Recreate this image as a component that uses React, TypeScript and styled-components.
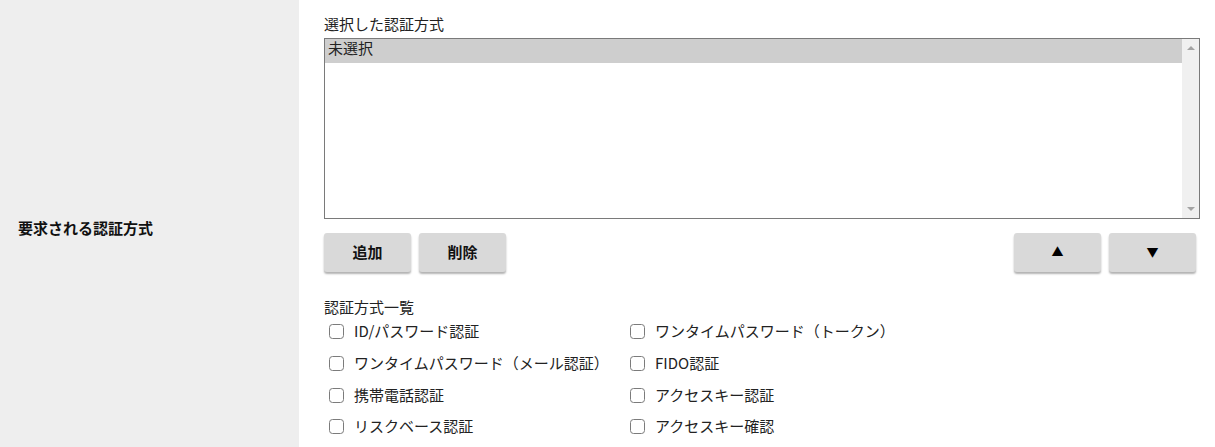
import React from "react";
import styled, { createGlobalStyle } from "styled-components";

const GlobalStyle = createGlobalStyle`
  html, body {
    margin: 0;
    padding: 0;
    background: #ffffff;
  }
  body {
    font-family: "Noto Sans CJK JP", "Noto Sans", sans-serif;
    color: #222222;
    font-size: 15px;
  }
  * { box-sizing: border-box; }
`;

const FormRow = styled.div`
  display: flex;
  width: 1215px;
`;

const HeaderCell = styled.div`
  width: 299px;
  flex: none;
  background: #eeeeee;
  display: flex;
  align-items: center;
  padding-left: 18px;
  padding-bottom: 2px;
  font-weight: 700;
  font-size: 15px;
  color: #111111;
`;

const BodyCell = styled.div`
  flex: 1;
  padding: 13px 15px 15px 25px;
  display: flex;
  flex-direction: column;
`;

const FieldLabel = styled.div<{ $top?: number }>`
  font-size: 15px;
  line-height: 22px;
  height: 22px;
  margin-top: ${(p) => p.$top ?? 0}px;
  color: #222222;
`;

const ListBox = styled.div`
  margin-top: 3px;
  height: 181px;
  border: 1px solid #7a7a7a;
  display: flex;
  background: #ffffff;
`;

const Options = styled.div`
  flex: 1;
  display: flex;
  flex-direction: column;
`;

const Option = styled.div<{ $selected?: boolean }>`
  height: 24px;
  line-height: 17px;
  padding-left: 3px;
  font-size: 15px;
  background: ${(p) => (p.$selected ? "#cecece" : "transparent")};
  color: #222222;
`;

const Scrollbar = styled.div`
  width: 17px;
  flex: none;
  background: #f0f0f0;
  display: flex;
  flex-direction: column;
  justify-content: space-between;
  align-items: center;
  padding: 7px 0;
`;

const Arrow = styled.div<{ $down?: boolean }>`
  width: 0;
  height: 0;
  border-left: 4px solid transparent;
  border-right: 4px solid transparent;
  ${(p) =>
    p.$down
      ? "border-top: 4px solid #a3a3a3;"
      : "border-bottom: 4px solid #a3a3a3;"}
`;

const ButtonBar = styled.div`
  margin-top: 14px;
  display: flex;
  justify-content: space-between;
`;

const ButtonGroup = styled.div<{ $right?: boolean }>`
  display: flex;
  gap: 8px;
  margin-right: ${(p) => (p.$right ? 4 : 0)}px;
`;

const ActionButton = styled.button`
  width: 87px;
  height: 39px;
  border: none;
  border-radius: 3px;
  background: #d9d9d9;
  box-shadow: 0 2px 2px rgba(0, 0, 0, 0.3);
  font-family: "Noto Sans CJK JP", "Noto Sans", sans-serif;
  font-weight: 700;
  font-size: 15px;
  color: #111111;
  display: flex;
  align-items: center;
  justify-content: center;
  padding: 0 0 2px;
  cursor: pointer;
`;

const ArrowGlyph = styled.span`
  font-size: 12px;
  line-height: 1;
  color: #000000;
`;

const CheckGrid = styled.div`
  display: grid;
  grid-template-columns: 301px 301px;
  grid-auto-rows: 31.7px;
  margin-top: -3px;
`;

const CheckItem = styled.label`
  display: flex;
  align-items: center;
  font-size: 15px;
  color: #222222;
`;

const CheckBox = styled.input`
  appearance: none;
  -webkit-appearance: none;
  width: 15px;
  height: 15px;
  margin: 0 10px 0 5px;
  flex: none;
  border: 1.5px solid #7b7b7b;
  border-radius: 3.5px;
  background: #ffffff;
  position: relative;
  top: 1px;
`;

const methods = [
  "ID/パスワード認証",
  "ワンタイムパスワード（トークン）",
  "ワンタイムパスワード（メール認証）",
  "FIDO認証",
  "携帯電話認証",
  "アクセスキー認証",
  "リスクベース認証",
  "アクセスキー確認",
];

export default function App() {
  return (
    <>
      <GlobalStyle />
      <FormRow>
        <HeaderCell>要求される認証方式</HeaderCell>
        <BodyCell>
          <FieldLabel>選択した認証方式</FieldLabel>
          <ListBox role="listbox">
            <Options>
              <Option $selected>未選択</Option>
            </Options>
            <Scrollbar>
              <Arrow />
              <Arrow $down />
            </Scrollbar>
          </ListBox>
          <ButtonBar>
            <ButtonGroup>
              <ActionButton>追加</ActionButton>
              <ActionButton>削除</ActionButton>
            </ButtonGroup>
            <ButtonGroup $right>
              <ActionButton>
                <ArrowGlyph>▲</ArrowGlyph>
              </ActionButton>
              <ActionButton>
                <ArrowGlyph>▼</ArrowGlyph>
              </ActionButton>
            </ButtonGroup>
          </ButtonBar>
          <FieldLabel $top={24}>認証方式一覧</FieldLabel>
          <CheckGrid>
            {methods.map((m) => (
              <CheckItem key={m}>
                <CheckBox type="checkbox" />
                {m}
              </CheckItem>
            ))}
          </CheckGrid>
        </BodyCell>
      </FormRow>
    </>
  );
}
